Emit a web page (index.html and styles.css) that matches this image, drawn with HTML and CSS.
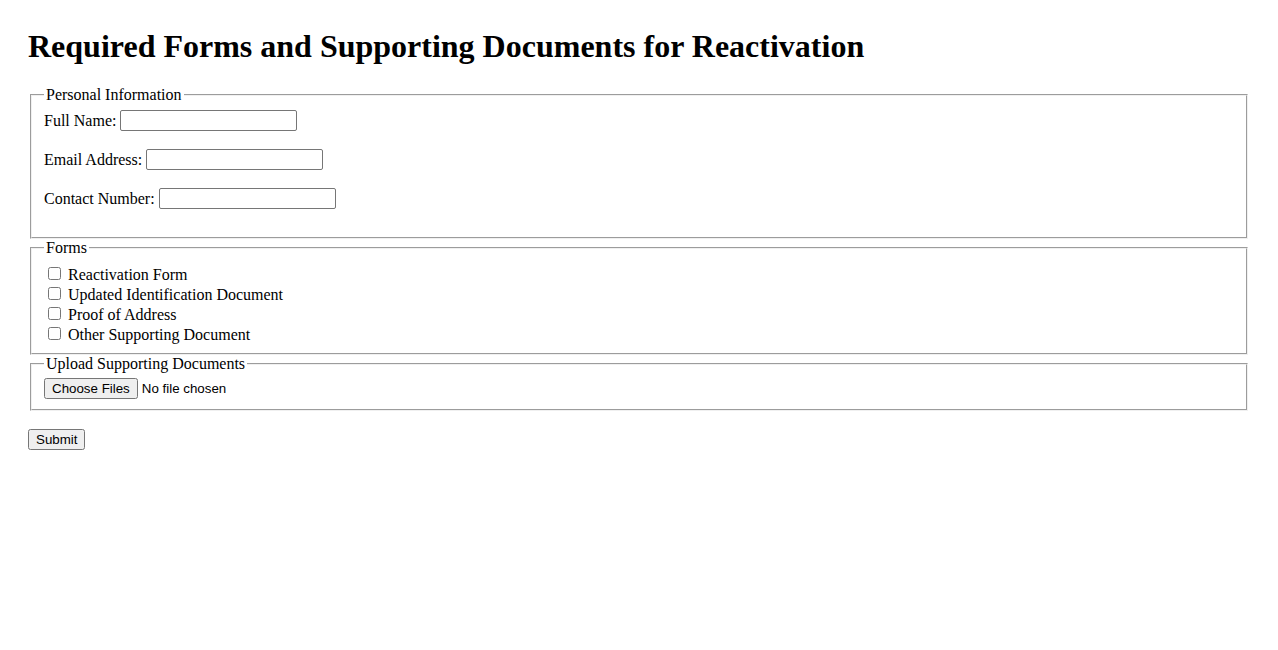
FILE: index.html
```html
<!DOCTYPE html>
<html lang="en">
<head>
    <meta charset="utf-8">
    <title>Reactivation Documents</title>
    <link rel="stylesheet" href="styles.css">
</head>
<body>
    <h1>Required Forms and Supporting Documents for Reactivation</h1>

    <form>
        <!-- personal details -->
        <fieldset>
            <legend>Personal Information</legend>
            <div class="field">
                <label for="fullName">Full Name:</label>
                <input type="text" id="fullName">
            </div>
            <div class="field">
                <label for="email">Email Address:</label>
                <input type="email" id="email">
            </div>
            <div class="field">
                <label for="phone">Contact Number:</label>
                <input type="tel" id="phone">
            </div>
        </fieldset>

        <!-- checklist -->
        <fieldset class="checklist">
            <legend>Forms</legend>
            <div class="check"><input type="checkbox" id="f1"> <label for="f1">Reactivation Form</label></div>
            <div class="check"><input type="checkbox" id="f2"> <label for="f2">Updated Identification Document</label></div>
            <div class="check"><input type="checkbox" id="f3"> <label for="f3">Proof of Address</label></div>
            <div class="check"><input type="checkbox" id="f4"> <label for="f4">Other Supporting Document</label></div>
        </fieldset>

        <!-- uploads -->
        <fieldset class="uploads">
            <legend>Upload Supporting Documents</legend>
            <input type="file" id="docs" multiple>
        </fieldset>

        <div class="actions">
            <button type="submit">Submit</button>
        </div>
    </form>
</body>
</html>
```

FILE: styles.css
```css
body {
    margin: 0;
    padding: 28px;
    font-family: "Liberation Serif", "Times New Roman", serif;
    font-size: 16px;
    color: #000;
    background: #fff;
}

h1 {
    font-size: 32px;
    margin: 0 0 21px;
}

fieldset {
    margin: 0 2px;
    padding: 6px 12px 10px;
    border: 2px groove #f0f0f0;
}

fieldset.checklist {
    padding-top: 7px;
    padding-bottom: 9px;
}

fieldset.uploads {
    padding-top: 5px;
}

legend {
    padding: 0 2px;
}

.field {
    min-height: 23px;
    margin-bottom: 16px;
}

.field input {
    width: 177px;
    height: 21px;
    box-sizing: border-box;
    border: 1px solid #767676;
    border-radius: 2px;
    padding: 1px 2px;
    font-family: "Liberation Sans", Arial, sans-serif;
    font-size: 13.33px;
    vertical-align: top;
}

.field label {
    display: inline-block;
    line-height: 22px;
}

.check {
    height: 20px;
}

.check input {
    margin: 3px 3px 3px 4px;
}

input[type="file"] {
    font-family: "Liberation Sans", Arial, sans-serif;
    font-size: 13.33px;
}

.actions {
    margin-top: 18px;
}

button {
    font-family: "Liberation Sans", Arial, sans-serif;
    font-size: 13.33px;
}
```
